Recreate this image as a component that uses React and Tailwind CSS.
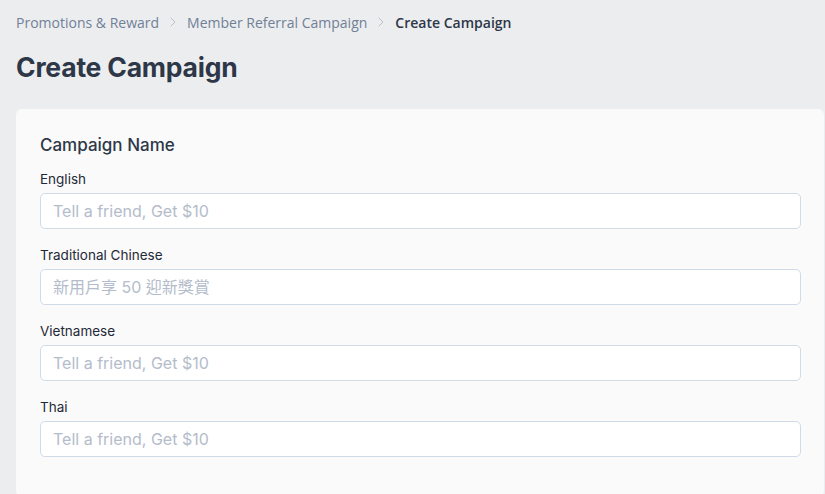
import { ChevronRight } from 'lucide-react'

const fields = [
  { label: 'English', placeholder: 'Tell a friend, Get $10' },
  { label: 'Traditional Chinese', placeholder: '新用戶享 50 迎新獎賞' },
  { label: 'Vietnamese', placeholder: 'Tell a friend, Get $10' },
  { label: 'Thai', placeholder: 'Tell a friend, Get $10' },
]

const crumbs = ['Promotions & Reward', 'Member Referral Campaign']

export default function App() {
  return (
    <div
      className="min-h-screen bg-[#ecedef] pl-4 pt-3 overflow-hidden"
      style={{ fontFamily: 'Inter, "Noto Sans CJK TC", sans-serif' }}
    >
      {/* Breadcrumb */}
      <nav
        className="flex items-center h-5 text-[14px] text-[#718096]"
        style={{ fontFamily: '"Open Sans", "Noto Sans CJK TC", sans-serif' }}
      >
        {crumbs.map((c) => (
          <span key={c} className="flex items-center">
            <span>{c}</span>
            <ChevronRight className="w-4 h-4 mx-[6px] text-[#b8c0cc]" strokeWidth={1.5} />
          </span>
        ))}
        <span className="font-semibold text-[#2d3748]">Create Campaign</span>
      </nav>

      {/* Page title */}
      <h1 className="mt-[17px] h-9 leading-9 text-[26.5px] font-bold text-[#2d3748] tracking-[-0.2px]">
        Create Campaign
      </h1>

      {/* Card */}
      <div className="mt-6 w-[808px] bg-[#fafafa] rounded-md pt-6 px-6 pb-10">
        <h2 className="text-[17px] leading-6 font-medium text-[#2d3748] mb-3">Campaign Name</h2>
        <div className="flex flex-col gap-4">
          {fields.map((f) => (
            <div key={f.label}>
              <label className="block text-[13.5px] leading-5 text-[#1f2937] mb-1">{f.label}</label>
              <input
                placeholder={f.placeholder}
                className="block w-[761px] h-9 rounded-[5px] border border-[#d0dbe8] bg-white px-3 text-[16px] text-[#2d3748] placeholder:text-[#b4bccb] outline-none"
              />
            </div>
          ))}
        </div>
      </div>
    </div>
  )
}
